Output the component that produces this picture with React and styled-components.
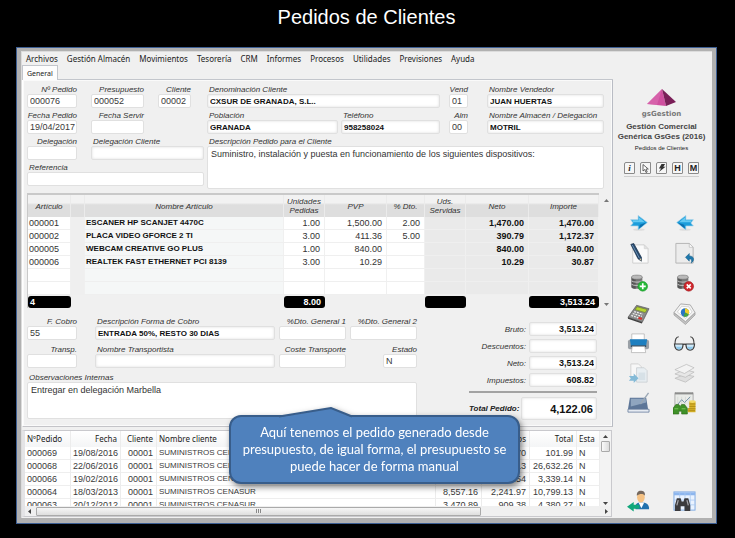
import React, { useId } from "react";
import styled, { createGlobalStyle, css } from "styled-components";

const sans = '"Liberation Sans", Arial, sans-serif';

const Global = createGlobalStyle`
  *, *::before, *::after { box-sizing: border-box; }
  body { margin: 0; background: #000; font-family: ${sans}; color: #333; }
  button, input, textarea { font: inherit; color: inherit; margin: 0; }
`;

/* ---------- page frame ---------- */
const Page = styled.div`
  display: flex;
  flex-direction: column;
  min-height: 100vh;
  padding: 5px 18px 14px 16px;
`;
const Title = styled.h1`
  margin: 0;
  height: 42px;
  font-size: 20px;
  line-height: 24px;
  font-weight: 400;
  text-align: center;
  color: #fff;
`;
const Window = styled.div`
  position: relative;
  flex: 1;
  display: flex;
  flex-direction: column;
  border: 1px solid #3d5f94;
  background: #b1b1b1;
  padding: 3px 4px 5px 4px;
`;
const Surface = styled.div`
  flex: 1;
  display: flex;
  flex-direction: column;
  background: #f0f0f0;
  border-top: 1px solid #dcdcdc;
  border-left: 1px solid #dcdcdc;
`;
const Menu = styled.nav`
  display: flex;
  gap: 9px;
  height: 13px;
  padding-left: 4px;
`;
const MenuButton = styled.button`
  border: 0;
  padding: 0;
  background: none;
  font-family: "Noto Sans", sans-serif;
  font-size: 8px;
  line-height: 13px;
  color: #222;
  white-space: nowrap;
`;
const Body = styled.div`
  flex: 1;
  display: flex;
`;
const Main = styled.main`
  flex: 1;
  min-width: 0;
  display: flex;
  flex-direction: column;
`;
const Tabs = styled.div`
  display: flex;
  height: 15px;
  border-bottom: 1px solid #c3c6cc;
`;
const Tab = styled.button`
  height: 15px;
  padding: 0 4px;
  border: 1px solid #c3c6cc;
  border-bottom: 0;
  background: #fdfdfd;
  font-family: "Noto Sans", sans-serif;
  font-size: 7px;
  line-height: 13px;
  color: #222;
`;
const Panel = styled.section`
  padding: 5px 4px 6px 4px;
  border-right: 1px solid #b9bcc4;
  border-bottom: 1px solid #c4c4c8;
  border-left: 1px solid #fff;
  box-shadow: inset 0 0 0 1px #fafafa;
`;

/* ---------- form ---------- */
const Form = styled.div`
  display: grid;
  grid-template-columns: 177px minmax(0, 1fr);
  column-gap: 3px;
  padding-right: 4px;
`;
const Stack = styled.div`
  display: flex;
  flex-direction: column;
  gap: ${(p) => (p.$loose ? 5 : 3)}px;
`;
const Line = styled.div`
  display: grid;
  grid-template-columns: ${(p) => p.$cols};
  column-gap: ${(p) => p.$gap || 4}px;
`;
const FieldBox = styled.div`
  display: flex;
  flex-direction: column;
  min-width: 0;
  grid-column: ${(p) => p.$column || "auto"};
`;
const Label = styled.label`
  font-size: 8px;
  line-height: 9px;
  font-style: italic;
  white-space: nowrap;
  color: #333;
  text-align: ${(p) => (p.$end ? "right" : "left")};
  padding-left: ${(p) => (p.$end ? 0 : 2)}px;
`;
const inset = css`
  width: 100%;
  border: 1px solid #e0e0e0;
  border-radius: 2px;
  background: #fff;
  outline: none;
`;
const Input = styled.input`
  ${inset}
  height: 14px;
  padding: 0 1px 0 2px;
  font-size: ${(p) => (p.$bold ? 8 : 9)}px;
  line-height: 12px;
  font-weight: ${(p) => (p.$bold ? 700 : 400)};
  text-align: ${(p) => (p.$end ? "right" : "left")};
  color: ${(p) => (p.$bold ? "#111" : "#3a3a3a")};
  box-shadow: ${(p) => (p.$bold || p.$shade ? "inset 0 0 3px #ddd" : "none")};
`;
const Area = styled.textarea`
  ${inset}
  display: block;
  height: ${(p) => p.$height}px;
  padding: 2px 3px;
  resize: none;
  font-size: 9px;
  line-height: 10px;
  color: #333;
`;

function Field({ label, value = "", end, bold, shade, area, column }) {
  const id = useId();
  return (
    <FieldBox $column={column}>
      <Label htmlFor={id} $end={end}>{label}</Label>
      {area ? (
        <Area id={id} $height={area} defaultValue={value} />
      ) : (
        <Input id={id} $bold={bold} $shade={shade} defaultValue={value} />
      )}
    </FieldBox>
  );
}

const VendorGap = styled.div`
  padding: 0 16px 0 6px;
`;
const NameGap = styled.div`
  padding-left: 14px;
`;
const StateGap = styled.div`
  padding-left: 33px;
`;

/* ---------- article lines ---------- */
const LinesArea = styled.div`
  display: flex;
  margin-top: 4px;
`;
const LinesTable = styled.table`
  flex: 1;
  min-width: 0;
  table-layout: fixed;
  border-collapse: separate;
  border-spacing: 0;
  border-top: 2px solid #c9c9c9;
  border-left: 1px solid #c9c9c9;
`;
const Col = styled.col`
  width: ${(p) => (p.$w ? `${p.$w}px` : "auto")};
`;
const HeadCell = styled.th`
  height: 22px;
  padding: 0;
  font-size: 8px;
  line-height: 9px;
  font-weight: 400;
  font-style: italic;
  color: #333;
  background: linear-gradient(#f2f2f2 0 35%, #dedede 45% 100%);
  border-right: 1px solid #ebebeb;
`;
const tones = { white: "#fff", pale: "#f5f7f7", grey: "#eaeaea", none: "#efefef" };
const LineCell = styled.td`
  height: 13px;
  padding: 0 4px 0 1px;
  font-size: ${(p) => (p.$name ? 8 : 9)}px;
  line-height: 12px;
  white-space: nowrap;
  text-align: ${(p) => (p.$end ? "right" : "left")};
  font-weight: ${(p) => (p.$bold ? 700 : 400)};
  color: ${(p) => (p.$bold ? "#111" : "#333")};
  background: ${(p) => tones[p.$tone]};
  border-bottom: 1px solid #efefef;
  border-right: 1px solid #f0f0f0;
`;
const SumCell = styled.td`
  padding: 0;
  height: 13px;
`;
const Sum = styled.div`
  height: 12px;
  padding: 0 4px 0 2px;
  border-radius: 3px;
  background: #000;
  color: #fff;
  font-size: 9px;
  line-height: 12px;
  font-weight: 700;
  text-align: ${(p) => (p.$end ? "right" : "left")};
`;
const SpinRail = styled.div`
  display: flex;
  flex-direction: column;
  justify-content: space-between;
  padding: 4px 0 1px 4px;
  width: 9px;
`;
const Arrow = styled.button`
  display: flex;
  align-items: center;
  justify-content: center;
  flex: none;
  width: ${(p) => p.$size || 6}px;
  height: ${(p) => p.$size || 6}px;
  padding: 0;
  border: 0;
  background: none;
`;
const turns = { up: "M0 4L2.5 1L5 4Z", down: "M0 1L2.5 4L5 1Z", left: "M4 0L1 2.5L4 5Z", right: "M1 0L4 2.5L1 5Z" };
function ArrowButton({ dir, label, size, color = "#777" }) {
  return (
    <Arrow aria-label={label} $size={size}>
      <svg width="5" height="5" viewBox="0 0 5 5"><path d={turns[dir]} fill={color} /></svg>
    </Arrow>
  );
}

const lineColumns = [
  { head: "Artículo", w: 43, tone: "white" },
  { head: "", w: 14, tone: "none" },
  { head: "Nombre Artículo", tone: "pale", bold: true, name: true },
  { head: "Unidades Pedidas", w: 41, tone: "white", end: true },
  { head: "PVP", w: 62, tone: "white", end: true },
  { head: "% Dto.", w: 38, tone: "white", end: true },
  { head: "Uds. Servidas", w: 41, tone: "grey", end: true },
  { head: "Neto", w: 63, tone: "grey", end: true, bold: true },
  { head: "Importe", w: 70, tone: "grey", end: true, bold: true },
];
const lineRows = [
  ["000001", "", "ESCANER HP SCANJET 4470C", "1.00", "1,500.00", "2.00", "", "1,470.00", "1,470.00"],
  ["000002", "", "PLACA VIDEO GFORCE 2 TI", "3.00", "411.36", "5.00", "", "390.79", "1,172.37"],
  ["000005", "", "WEBCAM CREATIVE GO PLUS", "1.00", "840.00", "", "", "840.00", "840.00"],
  ["000006", "", "REALTEK FAST ETHERNET PCI 8139", "3.00", "10.29", "", "", "10.29", "30.87"],
  Array(9).fill(""),
  Array(9).fill(""),
];
const lineSums = ["4", null, null, "8.00", null, null, "", null, "3,513.24"];

function Lines() {
  return (
    <LinesArea>
      <LinesTable>
        <colgroup>{lineColumns.map((c, i) => <Col key={i} $w={c.w} />)}</colgroup>
        <thead>
          <tr>{lineColumns.map((c, i) => <HeadCell key={i}>{c.head}</HeadCell>)}</tr>
        </thead>
        <tbody>
          {lineRows.map((row, r) => (
            <tr key={r}>
              {row.map((text, i) => {
                const c = lineColumns[i];
                return <LineCell key={i} $tone={c.tone} $end={c.end} $bold={c.bold} $name={c.name}>{text}</LineCell>;
              })}
            </tr>
          ))}
        </tbody>
        <tfoot>
          <tr>
            {lineSums.map((s, i) => (
              <SumCell key={i}>{s !== null && <Sum $end={i > 0}>{s}</Sum>}</SumCell>
            ))}
          </tr>
        </tfoot>
      </LinesTable>
      <SpinRail>
        <ArrowButton dir="up" label="Línea anterior" />
        <ArrowButton dir="down" label="Línea siguiente" />
      </SpinRail>
    </LinesArea>
  );
}

/* ---------- payment and totals ---------- */
const Foot = styled.div`
  display: grid;
  grid-template-columns: minmax(0, 1fr) 128px;
  column-gap: 52px;
  padding: 9px 11px 0 0;
`;
const Totals = styled.div`
  display: flex;
  flex-direction: column;
  gap: 3px;
  padding-top: 5px;
`;
const TotalLine = styled.div`
  display: grid;
  grid-template-columns: minmax(0, 1fr) 68px;
  column-gap: 3px;
  align-items: center;
`;
const TotalLabel = styled(Label)`
  text-align: right;
`;
const TotalInput = styled(Input)`
  padding-right: 2px;
  font-size: 9px;
`;
const GrandLine = styled.div`
  display: grid;
  grid-template-columns: minmax(0, 1fr) 76px;
  align-items: center;
  column-gap: 3px;
  padding-top: 4px;
  margin-top: 1px;
  border-top: 2px solid #a3a3a3;
`;
const GrandLabel = styled(Label)`
  font-weight: 700;
  padding: 0;
  color: #222;
`;
const GrandInput = styled(Input)`
  height: 23px;
  padding-right: 3px;
  font-size: 11px;
`;

function TotalRow({ label, value }) {
  const id = useId();
  return (
    <TotalLine>
      <TotalLabel htmlFor={id}>{label}</TotalLabel>
      <TotalInput id={id} $bold $end defaultValue={value} />
    </TotalLine>
  );
}

/* ---------- order list ---------- */
const ListBox = styled.section`
  flex: 1;
  display: flex;
  flex-direction: column;
  margin: 3px 1px 1px 0;
  border: 1px solid #c9c9cd;
  border-left: 3px solid #e4e4e6;
  background: #fff;
`;
const ListTop = styled.div`
  display: flex;
  height: 75px;
`;
const ListClip = styled.div`
  flex: 1;
  min-width: 0;
  height: 75px;
  overflow: hidden;
`;
const ListTable = styled.table`
  width: 100%;
  table-layout: fixed;
  border-collapse: separate;
  border-spacing: 0;
`;
const listCell = css`
  white-space: nowrap;
  text-align: ${(p) => (p.$end ? "right" : "left")};
  border-right: 1px solid #ececec;
`;
const ListHead = styled.th`
  ${listCell}
  height: 16px;
  padding: 0 3px 0 2px;
  font-family: "Noto Sans", sans-serif;
  font-size: 8px;
  line-height: 12px;
  font-weight: 400;
  color: #222;
  background: linear-gradient(#fff, #f4f5f6);
`;
const ListCell = styled.td`
  ${listCell}
  height: 13px;
  padding: 0 3px 0 2px;
  font-size: ${(p) => (p.$name ? 8 : 9)}px;
  line-height: 12px;
  color: #3a3a3a;
  border-bottom: 1px solid #eee;
`;
const VScroll = styled.div`
  display: flex;
  flex-direction: column;
  align-items: center;
  width: 11px;
  background: #f3f3f3;
  padding-top: 2px;
`;
const VThumb = styled.div`
  width: 9px;
  height: 11px;
  margin: 2px 0 auto;
  border: 1px solid #aaa;
  border-radius: 1px;
  background: linear-gradient(90deg, #fafafa, #dcdcdc);
`;
const HScroll = styled.div`
  flex: 1;
  display: flex;
  align-items: center;
  min-height: 9px;
  background: #f0f0f0;
`;
const HTrack = styled.div`
  flex: 1;
  padding: 0 121px 0 2px;
`;
const HThumb = styled.div`
  display: flex;
  align-items: center;
  justify-content: center;
  height: 9px;
  border: 1px solid #aaa;
  border-radius: 1px;
  background: linear-gradient(#f6f6f6, #dedede);
`;
const Grip = styled.span`
  width: 6px;
  height: 4px;
  background: repeating-linear-gradient(90deg, #888 0 1px, #eee 1px 2px);
`;

const listColumns = [
  { head: "NºPedido", w: 46 },
  { head: "Fecha", w: 50, end: true },
  { head: "Cliente", w: 36, end: true },
  { head: "Nombre cliente", name: true },
  { head: "Base", w: 46, end: true },
  { head: "Impuestos", w: 48, end: true },
  { head: "Total", w: 47, end: true },
  { head: "Esta", w: 23 },
];
const listRows = [
  ["000069", "19/08/2016", "00001", "SUMINISTROS CENASUR", "84.29", "17.70", "101.99", "N"],
  ["000068", "22/06/2016", "00001", "SUMINISTROS CENASUR", "22,010.13", "4,622.13", "26,632.26", "N"],
  ["000066", "19/02/2016", "00001", "SUMINISTROS CENASUR", "2,759.60", "579.54", "3,339.14", "N"],
  ["000064", "18/03/2013", "00001", "SUMINISTROS CENASUR", "8,557.16", "2,241.97", "10,799.13", "N"],
  ["000063", "20/12/2012", "00001", "SUMINISTROS CENASUR", "3,470.89", "909.38", "4,380.27", "N"],
];

function OrderList() {
  return (
    <ListBox>
      <ListTop>
        <ListClip>
          <ListTable>
            <colgroup>{listColumns.map((c) => <Col key={c.head} $w={c.w} />)}</colgroup>
            <thead>
              <tr>{listColumns.map((c) => <ListHead key={c.head} $end={c.end}>{c.head}</ListHead>)}</tr>
            </thead>
            <tbody>
              {listRows.map((row) => (
                <tr key={row[0]}>
                  {row.map((text, i) => (
                    <ListCell key={i} $end={listColumns[i].end} $name={listColumns[i].name}>{text}</ListCell>
                  ))}
                </tr>
              ))}
            </tbody>
          </ListTable>
        </ListClip>
        <VScroll>
          <ArrowButton dir="up" label="Subir" color="#444" />
          <VThumb />
          <ArrowButton dir="down" label="Bajar" color="#444" />
        </VScroll>
      </ListTop>
      <HScroll>
        <ArrowButton dir="left" label="Izquierda" size={9} color="#444" />
        <HTrack><HThumb><Grip /></HThumb></HTrack>
        <ArrowButton dir="right" label="Derecha" size={9} color="#444" />
      </HScroll>
    </ListBox>
  );
}

/* ---------- sidebar ---------- */
const Side = styled.aside`
  width: 99px;
  display: flex;
  flex-direction: column;
  align-items: center;
  padding: 24px 2px 2px 0;
`;
const Brand = styled.div`
  margin-top: 4px;
  font-family: "DejaVu Sans", sans-serif;
  font-size: 7px;
  line-height: 9px;
  font-weight: 700;
  color: #777;
`;
const Product = styled.div`
  margin-top: 3px;
  text-align: center;
  font-size: 8px;
  line-height: 10px;
  font-weight: 700;
  color: #444;
  white-space: nowrap;
`;
const Screen = styled.div`
  margin-top: 2px;
  font-size: 6px;
  line-height: 8px;
  color: #222;
`;
const MiniBar = styled.div`
  display: flex;
  gap: 5px;
  margin-top: 10px;
  padding-bottom: 2px;
  border-bottom: 1px solid #cfcfcf;
`;
const Mini = styled.button`
  display: flex;
  width: 11px;
  height: 12px;
  padding: 0;
  border: 1px solid #8a8a8a;
  border-radius: 2px 0 1px 0;
  background: #f6f6f6;
  align-items: center;
  justify-content: center;
  font-family: ${(p) => (p.$serif ? '"Liberation Serif", serif' : sans)};
  font-style: ${(p) => (p.$serif ? "italic" : "normal")};
  font-size: 9px;
  line-height: 10px;
  font-weight: 700;
  color: #222;
`;
const Tools = styled.div`
  display: grid;
  grid-template-columns: 46px 46px;
  grid-auto-rows: 30px;
  margin-top: ${(p) => (p.$last ? "auto" : "31px")};
`;
const Tool = styled.button`
  display: flex;
  align-items: center;
  justify-content: center;
  padding: 0;
  border: 0;
  background: none;
  opacity: ${(p) => (p.$off ? 0.7 : 1)};
`;

const Pyramid = () => (
  <svg width="29" height="17" viewBox="0 0 29 17">
    <path d="M15 0L0 15L19 17Z" fill="#cf4f9f" />
    <path d="M15 0L0 15L10 16Z" fill="#e07cbc" opacity=".4" />
    <path d="M15 0L19 17L29 13Z" fill="#7a1f58" />
  </svg>
);
const Svg = ({ children }) => <svg width="23" height="23" viewBox="0 0 24 24">{children}</svg>;
const SmallSvg = ({ children }) => <svg width="20" height="20" viewBox="1 0 22 24">{children}</svg>;

function Cylinder() {
  return (
    <>
      <path d="M3 5V17C3 19 15 20 16 17V5Z" fill="#777" />
      <path d="M3 5V17C4 18.500 6 19 8 19V6Z" fill="#565656" />
      <ellipse cx="9.500" cy="5" rx="6.500" ry="2.500" fill="#b9b9b9" stroke="#666" strokeWidth=".6" />
      <path d="M3 9.500C5 11.500 14 11.500 16 9.500M3 13.500C5 15.500 14 15.500 16 13.500" fill="none" stroke="#d6d6d6" />
    </>
  );
}

const icons = {
  next: (
    <SmallSvg>
      <ellipse cx="12" cy="20" rx="7" ry="1.4" fill="#ddd" />
      <path d="M2 8H11V3L22 11.500L11 20V15.500H2L5 12Z" fill="#1b9ddb" stroke="#9ccfe8" strokeWidth=".8" />
      <path d="M4 8.800H12V5L19 11H5Z" fill="#63c9f2" />
      <path d="M13 14L21 11.500L12 19Z" fill="#0b6fae" />
    </SmallSvg>
  ),
  prev: (
    <SmallSvg>
      <ellipse cx="12" cy="20" rx="7" ry="1.4" fill="#ddd" />
      <path d="M22 8H13V3L2 11.500L13 20V15.500H22L19 12Z" fill="#1b9ddb" stroke="#9ccfe8" strokeWidth=".8" />
      <path d="M20 8.800H12V5L5 11H19Z" fill="#63c9f2" />
      <path d="M11 14L3 11.500L12 19Z" fill="#0b6fae" />
    </SmallSvg>
  ),
  edit: (
    <Svg>
      <path d="M6 3H18L22 7V22H6Z" fill="#fafafa" stroke="#cfcfcf" />
      <path d="M18 3V7H22Z" fill="#e2e2e2" stroke="#cfcfcf" strokeWidth=".6" />
      <path d="M4 2.500L7 1.500L15 16V20L11.500 17.500Z" fill="#27496e" stroke="#122a45" strokeWidth=".7" />
      <path d="M5.500 3L13 17" stroke="#7fa5c8" strokeWidth=".8" />
      <path d="M13 18L15 20L14.500 17Z" fill="#d8c79a" />
    </Svg>
  ),
  undo: (
    <Svg>
      <path d="M3 1.500H17L21 5.500V22H3Z" fill="#ececec" stroke="#b5b5b5" />
      <path d="M17 1.500V5.500H21Z" fill="#fff" stroke="#b5b5b5" strokeWidth=".7" />
      <path d="M13 16L17 12V14.500C22 14.500 23 19 19 22C20 19 19.500 17.700 17 17.700V20Z" fill="#1e78ac" stroke="#0e557f" strokeWidth=".5" />
    </Svg>
  ),
  dbAdd: (
    <SmallSvg>
      <Cylinder />
      <circle cx="16.500" cy="16" r="5.800" fill="#25b837" stroke="#128a22" strokeWidth=".6" />
      <path d="M16.500 12.400V19.600M12.900 16H20.100" stroke="#fff" strokeWidth="2" />
    </SmallSvg>
  ),
  dbDel: (
    <SmallSvg>
      <Cylinder />
      <circle cx="16.500" cy="16" r="5.800" fill="#d0262c" stroke="#8d1014" strokeWidth=".6" />
      <path d="M14.100 13.600L18.900 18.400M18.900 13.600L14.100 18.400" stroke="#fff" strokeWidth="1.900" />
    </SmallSvg>
  ),
  calc: (
    <Svg>
      <path d="M1 16L10 3.500L23 7L16 21Z" fill="#8a8a8a" stroke="#555" strokeWidth=".7" />
      <path d="M1 16L16 21L15.500 22.500L1 17.500Z" fill="#3f3f3f" />
      <path d="M10.500 5L21 7.800L19 11L8.500 8Z" fill="#b6d532" stroke="#5b6b1b" strokeWidth=".5" />
      <path d="M7.500 10L16.500 12.700M6 12L15.500 15M4.500 14L14 17.300" stroke="#eee" strokeWidth="1.300" strokeDasharray="2 1" />
      <path d="M12.500 15.500L16 16.600L15 18.700L11.500 17.500Z" fill="#d8322f" />
    </Svg>
  ),
  report: (
    <Svg>
      <path d="M1 11L13 20.500L23 11V13.500L13 23.500L1 13.500Z" fill="#c4c4c4" stroke="#8e8e8e" strokeWidth=".6" />
      <path d="M1 11L8 2L18 3L23 11L13 20.500Z" fill="#f4f4f4" stroke="#999" strokeWidth=".8" />
      <path d="M4.500 10.500L9 4.500L16.500 5L20 10.500L13 17Z" fill="#fff" stroke="#bbb" strokeWidth=".6" />
      <circle cx="12.500" cy="11" r="4.400" fill="#2a74c4" />
      <path d="M12.500 11V6.600A4.400 4.400 0 0 1 16.500 13Z" fill="#f1cf2b" />
      <path d="M12.500 11L16.500 13A4.400 4.400 0 0 1 11 15.100Z" fill="#4aa63c" />
    </Svg>
  ),
  print: (
    <Svg>
      <path d="M5 2H18V9H5Z" fill="#fff" stroke="#aaa" strokeWidth=".7" />
      <rect x="1" y="8" width="22" height="10" rx="2" fill="#9aa0a6" />
      <path d="M3 7.500H21L20 14H4Z" fill="#1d7fc0" />
      <path d="M4 14H20V15.500H4Z" fill="#123c5c" />
      <path d="M5.500 15H18.500L19.500 21.500H4.500Z" fill="#fff" stroke="#aaa" strokeWidth=".7" />
    </Svg>
  ),
  glasses: (
    <Svg>
      <path d="M2 14C2 8 3 5 6 5M22 14C22 8 21 5 18 5" fill="none" stroke="#444" strokeWidth="1.200" />
      <path d="M1.500 12.500H10.500C10.500 21 2 21 1.500 12.500ZM13.500 12.500H22.500C22 21 13.500 21 13.500 12.500Z" fill="#cfe9f8" stroke="#3d3d3d" strokeWidth="1.200" />
      <path d="M3 15.500H9.500C8 19.500 4.500 19 3 15.500ZM14.500 15.500H21C19.500 19.500 16 19 14.500 15.500Z" fill="#8ec9ec" />
      <path d="M10.500 13.500Q12 12 13.500 13.500" fill="none" stroke="#3d3d3d" strokeWidth="1.200" />
    </Svg>
  ),
  copy: (
    <Svg>
      <path d="M4 2H12L15 5V16H4Z" fill="#fafafa" stroke="#bbb" strokeWidth=".8" />
      <path d="M10 6H18L21 9V21H10Z" fill="#e6eef3" stroke="#b4bcc2" strokeWidth=".8" />
      <path d="M12 11H19V19H12Z" fill="#cddbe4" />
      <path d="M2 14.500H7V12L12 17L7 22V19.500H2L4 17Z" fill="#57a4cd" />
    </Svg>
  ),
  layers: (
    <Svg>
      <path d="M2 17L12 13L22 15L13 21Z" fill="#d9d9d9" stroke="#a6a6a6" strokeWidth=".8" />
      <path d="M2 12.500L12 8L22 10.500L13 16Z" fill="#e4e4e4" stroke="#a6a6a6" strokeWidth=".8" />
      <path d="M2 8L14 2.500L22 6L12 12Z" fill="#f5f5f5" stroke="#a6a6a6" strokeWidth=".8" />
    </Svg>
  ),
  scan: (
    <Svg>
      <path d="M3 6H20L22 18H1Z" fill="#5d7698" />
      <path d="M4 7H19.500L20 11L4 15Z" fill="#8fa5bf" />
      <path d="M1 18H23V21H1Z" fill="#e6ebf2" stroke="#63789a" strokeWidth=".8" />
      <path d="M22.500 1L14 12.500" stroke="#9aa7b5" strokeWidth="1.400" />
    </Svg>
  ),
  finance: (
    <Svg>
      <rect x="2" y="0" width="19" height="19" rx="1.500" fill="#e9ebe8" stroke="#9b9b9b" strokeWidth=".8" />
      <path d="M2 1.500H21" stroke="#8c8c8c" strokeWidth="2" />
      <path d="M5 5V13M9 5V13M13 5V13M17 5V13" stroke="#cfd4d0" strokeWidth=".7" />
      <path d="M5 13L9 8L12 11L18 5" fill="none" stroke="#7793a9" />
      <path d="M0 17L3 13H6L7.500 15L9 13H12L15 17V23H9V20H6V23H0Z" fill="#3f9128" stroke="#24620f" strokeWidth=".6" />
      <path d="M1.500 17.500H5.500M9 17.500H13" stroke="#7cc95c" />
      <path d="M17 10H23.500V21H15.500V17H17Z" fill="#d9b429" />
      <path d="M17 12.500H23.500M17 15H23.500M16 17.500H23.500M16 19.500H23" stroke="#9c7a0e" strokeWidth=".7" />
      <ellipse cx="20.300" cy="10" rx="3.200" ry="1.500" fill="#f3dc6b" />
    </Svg>
  ),
  exit: (
    <Svg>
      <path d="M9 20C8 15 10 13 15 13C20 13 23.500 15 23 20Z" fill="#2272ae" />
      <path d="M12 13L15 19L18 13Z" fill="#fff" />
      <ellipse cx="14.500" cy="7.500" rx="4" ry="5.500" fill="#f5c284" />
      <path d="M10.300 6C10 2 12 .5 15 .8C18.500 1 19 4 18.700 6C17.500 3.500 13 3.500 10.300 6Z" fill="#75685e" />
      <path d="M0 17.500L7 12.500V15.500H13V19.500H7V22.500Z" fill="#10a77b" />
    </Svg>
  ),
  search: (
    <Svg>
      <rect x="1" y="2" width="22" height="19" fill="#eaf3ff" stroke="#7ea9e2" />
      <path d="M1 4H23" stroke="#8db6ee" strokeWidth="3" />
      <path d="M1 10.500H23M1 15.500H23M7 3V21M12.500 3V21M18 3V21" stroke="#a9c8f0" strokeWidth=".8" />
      <path d="M2 22V16L4 8.500H8L9 12H11L12 8.500H16L18 16V22H12V17H8V22Z" fill="#3b3b3e" />
      <path d="M4 16L5.500 10.500M14.500 10.500L16 16" stroke="#a5a5aa" strokeWidth="1.300" />
    </Svg>
  ),
};

const tools = [
  ["next", "Siguiente"], ["prev", "Anterior"],
  ["edit", "Editar"], ["undo", "Deshacer"],
  ["dbAdd", "Añadir"], ["dbDel", "Eliminar"],
  ["calc", "Calcular"], ["report", "Informe"],
  ["print", "Imprimir"], ["glasses", "Ver"],
  ["copy", "Copiar", true], ["layers", "Capas", true],
  ["scan", "Escanear"], ["finance", "Finanzas"],
];

function Sidebar() {
  return (
    <Side>
      <Pyramid />
      <Brand>gsGestion</Brand>
      <Product>Gestión Comercial<br />Genérica GsGes (2016)</Product>
      <Screen>Pedidos de Clientes</Screen>
      <MiniBar>
        <Mini $serif>i</Mini>
        <Mini aria-label="Seleccionar">
          <svg width="7" height="9" viewBox="0 0 7 9"><path d="M1 .5V7L2.800 5.500L4 8.500L5.200 8L4 5H6.300Z" fill="#fff" stroke="#444" strokeWidth=".8" /></svg>
        </Mini>
        <Mini aria-label="Acción rápida">
          <svg width="8" height="8" viewBox="0 0 9 9"><path d="M4 0H8L6 3H8.500L1 9L3.500 5H1Z" fill="#333" /></svg>
        </Mini>
        <Mini>H</Mini>
        <Mini>M</Mini>
      </MiniBar>
      <Tools>
        {tools.map(([key, label, off]) => <Tool key={key} aria-label={label} $off={off}>{icons[key]}</Tool>)}
      </Tools>
      <Tools $last>
        <Tool aria-label="Salir">{icons.exit}</Tool>
        <Tool aria-label="Buscar">{icons.search}</Tool>
      </Tools>
    </Side>
  );
}

/* ---------- callout ---------- */
const Callout = styled.div`
  position: absolute;
  left: 212px;
  bottom: 39px;
  width: 291px;
  padding: 7px 8px;
  border: 2px solid #385d8a;
  border-radius: 12px;
  background: #4f81bd;
  color: #fff;
  font-family: Lato, sans-serif;
  font-size: 13px;
  line-height: 17px;
  text-align: center;
  filter: drop-shadow(2px 3px 3px rgba(0, 0, 0, 0.5));
`;
const Tail = styled.svg`
  position: absolute;
  left: 48px;
  top: -10px;
`;

const menu = ["Archivos", "Gestión Almacén", "Movimientos", "Tesorería", "CRM", "Informes", "Procesos", "Utilidades", "Previsiones", "Ayuda"];
const customerCols = "131px minmax(0, 1fr) 41px 117px";
const paymentCols = "50px minmax(0, 1fr) 67px 67px";

export default function App() {
  const grandId = useId();
  return (
    <Page>
      <Global />
      <Title>Pedidos de Clientes</Title>
      <Window>
        <Surface>
          <Menu>{menu.map((m) => <MenuButton key={m}>{m}</MenuButton>)}</Menu>
          <Body>
            <Main>
              <Tabs><Tab>General</Tab></Tabs>
              <Panel>
                <Form>
                  <Stack>
                    <Line $cols="50px 53px 33px" $gap={14}>
                      <Field label="Nº Pedido" value="000076" end />
                      <Field label="Presupuesto" value="000052" end />
                      <Field label="Cliente" value="00002" end />
                    </Line>
                    <Line $cols="50px 53px" $gap={14}>
                      <Field label="Fecha Pedido" value="19/04/2017" end />
                      <Field label="Fecha Servir" end />
                    </Line>
                    <Line $cols="50px minmax(0, 1fr)" $gap={14}>
                      <Field label="Delegación" end />
                      <Field label="Delegación Cliente" shade />
                    </Line>
                    <Field label="Referencia" />
                  </Stack>
                  <Stack>
                    <Line $cols={customerCols} $gap={3}>
                      <Field label="Denominación Cliente" value="CXSUR DE GRANADA, S.L.." bold column="1 / 3" />
                      <VendorGap><Field label="Vend" value="01" end /></VendorGap>
                      <Field label="Nombre Vendedor" value="JUAN HUERTAS" bold />
                    </Line>
                    <Line $cols={customerCols} $gap={3}>
                      <Field label="Población" value="GRANADA" bold />
                      <Field label="Teléfono" value="958258024" bold />
                      <VendorGap><Field label="Alm" value="00" end /></VendorGap>
                      <Field label="Nombre Almacén / Delegación" value="MOTRIL" bold />
                    </Line>
                    <Field
                      label="Descripción Pedido para el Cliente"
                      value="Suministro, instalación y puesta en funcionamiento de los siguientes dispositivos:"
                      area={43}
                    />
                  </Stack>
                </Form>
                <Lines />
                <Foot>
                  <Stack $loose>
                    <Line $cols={paymentCols}>
                      <Field label="F. Cobro" value="55" end />
                      <NameGap><Field label="Descripción Forma de Cobro" value="ENTRADA 50%, RESTO 30 DIAS" bold /></NameGap>
                      <Field label="%Dto. General 1" end />
                      <Field label="%Dto. General 2" end />
                    </Line>
                    <Line $cols={paymentCols}>
                      <Field label="Transp." end />
                      <NameGap><Field label="Nombre Transportista" shade /></NameGap>
                      <Field label="Coste Transporte" end />
                      <StateGap><Field label="Estado" value="N" end /></StateGap>
                    </Line>
                    <Field label="Observaciones Internas" value="Entregar en delegación Marbella" area={37} />
                  </Stack>
                  <Totals>
                    <TotalRow label="Bruto:" value="3,513.24" />
                    <TotalRow label="Descuentos:" value="" />
                    <TotalRow label="Neto:" value="3,513.24" />
                    <TotalRow label="Impuestos:" value="608.82" />
                    <GrandLine>
                      <GrandLabel htmlFor={grandId}>Total Pedido:</GrandLabel>
                      <GrandInput id={grandId} $bold $end defaultValue="4,122.06" />
                    </GrandLine>
                  </Totals>
                </Foot>
              </Panel>
              <OrderList />
            </Main>
            <Sidebar />
          </Body>
        </Surface>
        <Callout>
          <Tail width="74" height="12" viewBox="0 0 74 12">
            <path d="M1 12L1 10L52 1L72 10V12Z" fill="#4f81bd" />
            <path d="M0 9.500L52 1L73 9.500" fill="none" stroke="#385d8a" strokeWidth="2" />
          </Tail>
          Aquí tenemos el pedido generado desde presupuesto, de igual forma, el presupuesto se puede hacer de forma manual
        </Callout>
      </Window>
    </Page>
  );
}
